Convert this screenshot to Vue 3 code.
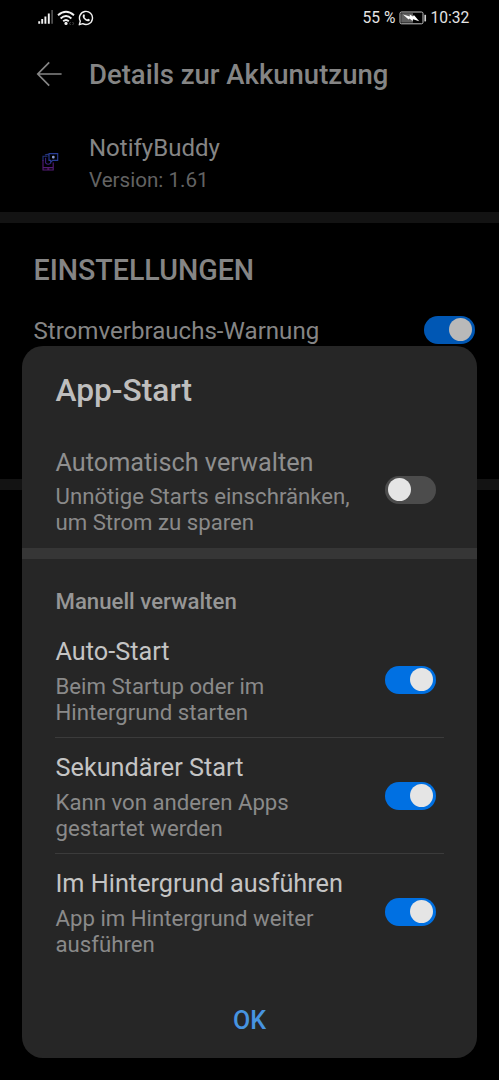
<script setup>
import { reactive } from 'vue'

const auto = reactive({ title: 'Automatisch verwalten', lines: ['Unnötige Starts einschränken,', 'um Strom zu sparen'], on: false })
const items = reactive([
  { title: 'Auto-Start', lines: ['Beim Startup oder im', 'Hintergrund starten'], on: true },
  { title: 'Sekundärer Start', lines: ['Kann von anderen Apps', 'gestartet werden'], on: true },
  { title: 'Im Hintergrund ausführen', lines: ['App im Hintergrund weiter', 'ausführen'], on: true }
])
</script>

<template>
  <div class="screen">
    <header class="status">
      <svg class="signal" viewBox="0 0 16 16" width="16" height="16">
        <path d="M1.2 12.2v2.600M4.200 10v4.800M7.400 7.400v7.400M10.800 4.400v10.400" stroke="#f2f2f2" stroke-width="1.900" />
        <path d="M14.100 1v13.800" stroke="#4c4c4c" stroke-width="1.800" />
      </svg>
      <svg class="wifi" viewBox="0 0 18 16" width="18" height="16">
        <g fill="none" stroke="#f2f2f2" stroke-width="1.900">
          <path d="M1 5.200Q9 -1.800 17 5.200" />
          <path d="M3.600 8.500Q9 3.600 14.400 8.500" />
          <path d="M6.200 11.300Q9 8.800 11.800 11.300" />
        </g>
        <circle cx="9" cy="13.400" r="1.600" fill="#f2f2f2" />
        <path d="M13.600 12l-1 1.500 1 1.500M15.600 12l1 1.500-1 1.500" fill="none" stroke="#555" stroke-width=".8" />
      </svg>
      <svg class="whatsapp" viewBox="0 0 16 16" width="16" height="16">
        <path d="M1.300 14.700l1-3.600a6.500 6.500 0 1 1 2.500 2.500z" fill="none" stroke="#f2f2f2" stroke-width="1.400" stroke-linejoin="round" />
        <path d="M5.400 4.500c.4-.3.800-.2 1 .1l.6 1.300c.1.400-.5.800-.6 1.100.6 1.200 1.500 2 2.700 2.500.4-.2.800-.9 1.200-.8l1.300.7c.5.300.1 1.200-.4 1.600-1 .6-2.500.2-3.900-.7C5.900 9.200 4.900 7.900 4.700 6.600c-.1-.9.200-1.700.7-2.100z" fill="#f2f2f2" />
      </svg>
      <span class="percent">55 %</span>
      <svg class="battery" viewBox="0 0 28 14" width="28" height="14">
        <rect x="1" y="1" width="23" height="11.800" rx="1.500" fill="none" stroke="#c4c4c4" stroke-width="1" />
        <rect x="2.200" y="2.200" width="11.800" height="9.400" fill="#606060" />
        <path d="M4 3.600l6.800 1.900v-2l3.200 2 .9-1.500 5.300 6.300-6.200-2.100-.4 1.700-3-2.300-1 .9z" fill="#fff" />
        <path d="M26.200 3.800v6.600" stroke="#d0d0d0" stroke-width="1.700" />
      </svg>
      <span class="time">10:32</span>
    </header>

    <div class="topbar">
      <svg class="back" viewBox="0 0 26 26" width="26" height="26">
        <path d="M25.600 13H1.800M13.200 1.400L1.800 13l11.400 11.600" fill="none" stroke="#858585" stroke-width="1.700" />
      </svg>
      <h1>Details zur Akkunutzung</h1>
    </div>

    <section class="app">
      <svg class="logo" viewBox="0 0 18 20" width="18" height="20">
        <g fill="none" stroke-width="1.100">
          <path d="M6.500 4.200H2V9" stroke="#24347a" />
          <path d="M2 8v10h10.200v-7.500M2 15.600h10.200" stroke="#541c78" />
          <path d="M6.300 17h2" stroke="#7a2480" />
          <path d="M4.600 5.800v5q2.800 3 5.600-.2" stroke="#3d2080" />
          <path d="M4 3q3-1.500 4 .5" stroke="#24347a" />
          <path d="M8 1.600h8.700v6.800h-5l-2 1.800V8.400H8z" stroke="#283c96" />
        </g>
        <rect x="11" y="3.700" width="2.600" height="2.800" rx="1" fill="#8c9cd4" />
      </svg>
      <div>
        <div class="app-name">NotifyBuddy</div>
        <div class="app-version">Version: 1.61</div>
      </div>
    </section>

    <div class="band"></div>

    <section class="settings">
      <h2>EINSTELLUNGEN</h2>
      <div class="warning">
        <span>Stromverbrauchs-Warnung</span>
        <i class="switch on dim"></i>
      </div>
    </section>

    <div class="band"></div>

    <div class="dialog">
      <h3>App-Start</h3>
      <div class="row muted">
        <div>
          <div class="row-title">{{ auto.title }}</div>
          <div class="row-sub"><div v-for="l in auto.lines" :key="l">{{ l }}</div></div>
        </div>
        <i class="switch" :class="{ on: auto.on }" @click="auto.on = !auto.on"></i>
      </div>
      <div class="divider"></div>
      <div class="group">Manuell verwalten</div>
      <div v-for="item in items" :key="item.title" class="row manual">
        <div>
          <div class="row-title">{{ item.title }}</div>
          <div class="row-sub"><div v-for="l in item.lines" :key="l">{{ l }}</div></div>
        </div>
        <i class="switch" :class="{ on: item.on }" @click="item.on = !item.on"></i>
      </div>
      <button class="ok">OK</button>
    </div>
  </div>
</template>

<style>
body {
  background: #000;
}
</style>

<style scoped>
.screen {
  position: relative;
  width: 499px;
  height: 1080px;
  overflow: hidden;
  background: #000;
  font-family: Roboto, "Noto Sans", sans-serif;
  white-space: nowrap;
}
h1, h2, h3 {
  margin: 0;
  font-weight: 500;
}
svg {
  display: block;
  flex: none;
}
.status {
  display: flex;
  align-items: center;
  height: 36px;
  padding-left: 38px;
  color: #e4e4e4;
  font-size: 15.600px;
}
.signal { margin-top: -2px; }
.wifi { margin: -1px 0 0 3px; }
.whatsapp { margin: -1px 0 0 3px; }
.percent {
  width: 32px;
  margin-left: 268.500px;
}
.battery { margin-left: 4px; }
.time { margin-left: 4px; }
.topbar {
  display: flex;
  align-items: center;
  height: 76px;
  padding-left: 36px;
}
.back { margin-top: -1px; }
.topbar h1 {
  margin: 2px 0 0 27px;
  color: #858585;
  font-size: 27.500px;
  line-height: 34px;
}
.app {
  display: flex;
  height: 100px;
  padding-left: 41px;
  box-sizing: border-box;
}
.logo { margin: 40px 30px 0 0; }
.app-name {
  margin-top: 20px;
  color: #858585;
  font-size: 24px;
  line-height: 32px;
}
.app-version {
  margin-top: 2px;
  color: #636363;
  font-size: 20.600px;
  line-height: 29px;
}
.band {
  height: 11px;
  background: #131313;
}
.settings {
  height: 256px;
  padding: 29px 24.500px 0 33.500px;
  box-sizing: border-box;
}
.settings h2 {
  color: #858585;
  font-size: 28.600px;
  line-height: 36px;
}
.warning {
  display: flex;
  align-items: center;
  justify-content: space-between;
  height: 36px;
  margin-top: 24px;
  color: #858585;
  font-size: 24.100px;
}
.warning span { padding-top: 2px; }
.switch {
  position: relative;
  flex: none;
  width: 51px;
  height: 28px;
  border-radius: 14px;
  background: #4c4c4c;
}
.switch::after {
  content: "";
  position: absolute;
  left: 2.500px;
  top: 2px;
  width: 23px;
  height: 23px;
  border-radius: 50%;
  background: #e5e5e5;
}
.switch.on { background: #0070e2; }
.switch.on::after { left: 25px; }
.switch.dim { background: #0057b4; }
.switch.dim::after { background: #b9b9b9; }
.dialog {
  position: absolute;
  left: 22px;
  top: 346px;
  width: 455px;
  height: 712px;
  border-radius: 21px;
  background: #262626;
}
.dialog h3 {
  height: 87px;
  padding: 25px 0 0 33.500px;
  box-sizing: border-box;
  color: #bebebe;
  font-size: 31.700px;
  line-height: 40px;
}
.row {
  display: flex;
  justify-content: space-between;
  align-items: flex-start;
  height: 115px;
  margin: 0 33px;
  padding: 13px 8px 0 .5px;
  box-sizing: border-box;
}
.row .switch { margin-top: 30px; }
.row-title {
  color: #c4c4c4;
  font-size: 25.250px;
  line-height: 33px;
}
.row-sub {
  margin-top: 4px;
  color: #8a8a8a;
  font-size: 22.200px;
  line-height: 26px;
}
.muted .row-title { color: #8f8f8f; }
.divider {
  height: 11px;
  background: #363636;
}
.group {
  height: 63px;
  padding: 29px 0 0 33.500px;
  box-sizing: border-box;
  color: #969696;
  font-size: 22.200px;
  font-weight: 500;
  line-height: 26px;
}
.manual {
  height: 116px;
  padding-top: 14px;
  border-bottom: 1px solid #3b3b3b;
}
.manual .row-title { line-height: 32px; }
.manual .row-sub { margin-top: 5px; }
.manual:nth-last-child(2) { border-color: transparent; }
.ok {
  display: block;
  width: 120px;
  height: 48px;
  margin: 27px auto 0;
  padding: 0;
  border: 0;
  background: none;
  color: #4794e0;
  font: 500 25px/48px Roboto, sans-serif;
}
</style>
